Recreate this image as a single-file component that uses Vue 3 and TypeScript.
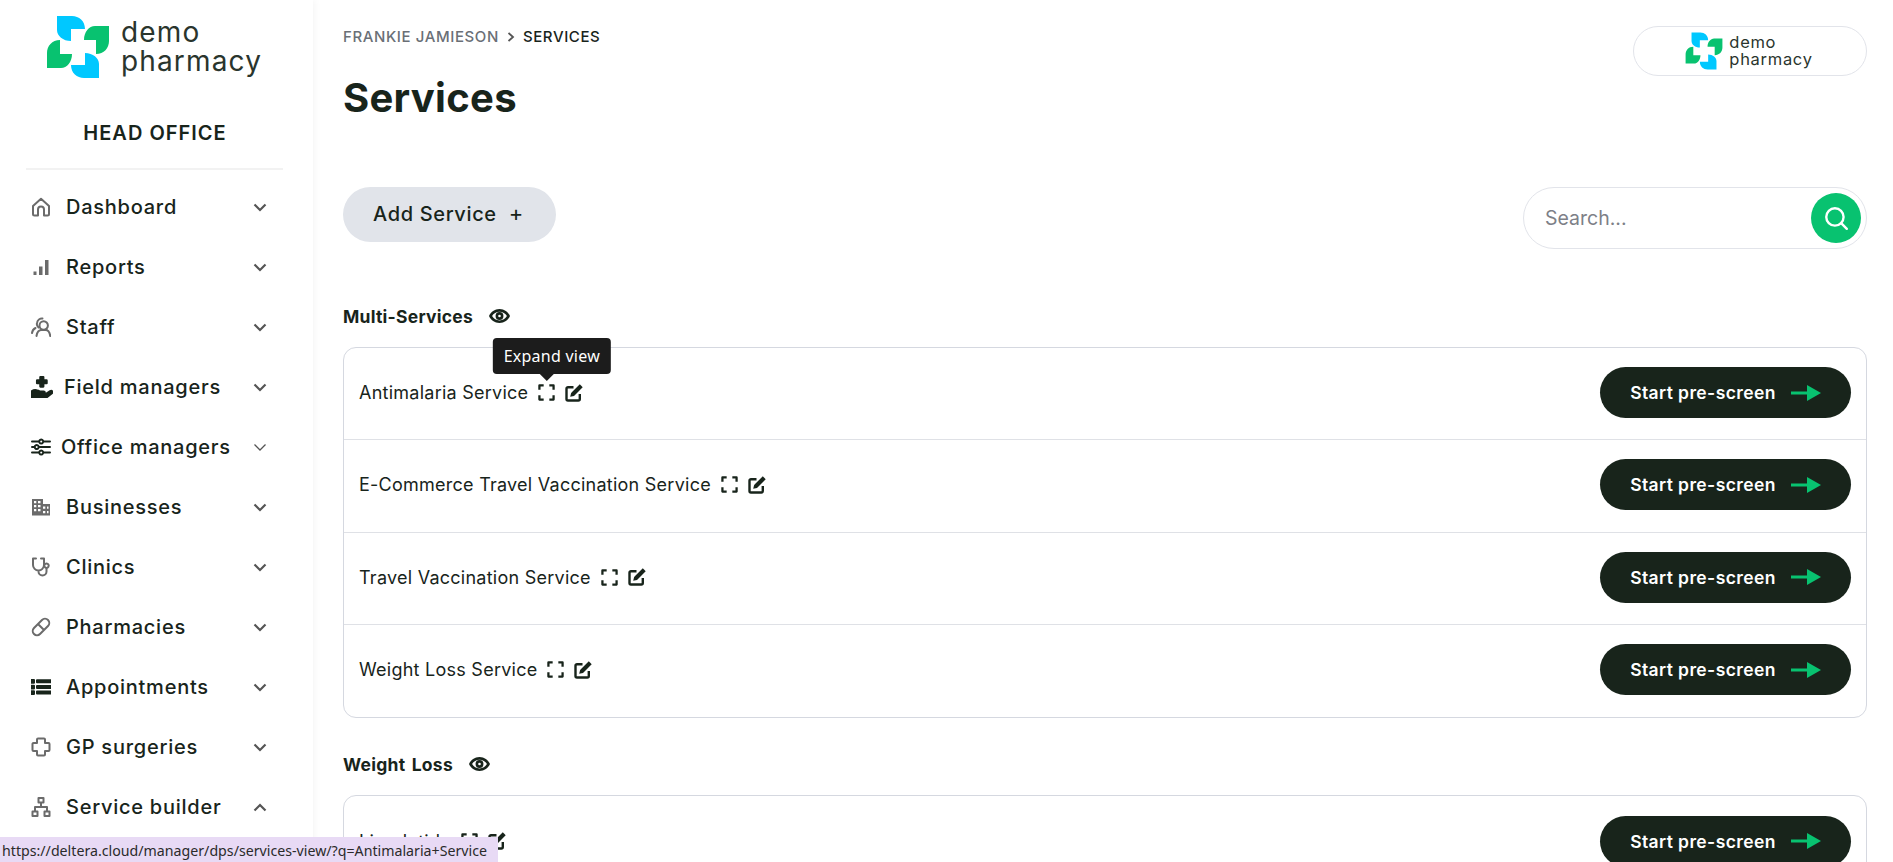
<script setup lang="ts">
interface NavItem { label: string; icon: string; filled?: boolean; cls?: string; open?: boolean }
const nav: NavItem[] = [
  { label: 'Dashboard', icon: 'M2 9 10 1.800 18 9v8a1.500 1.500 0 0 1-1.500 1.500H13V12.500a3 3 0 0 0-6 0v6H3.500A1.500 1.500 0 0 1 2 17Z' },
  { label: 'Reports', filled: true, icon: 'M2.500 14.500h3v3.500h-3ZM8 9.500h3.500V18H8ZM14 3h3.500v15H14Z' },
  { label: 'Staff', icon: 'M8.500 8.500a4.200 4.200 0 1 1 8.400 0 4.200 4.200 0 0 1-8.400 0ZM5.500 19c.5-3.500 2.500-6 5-6h4c2.500 0 4.300 2.500 4.700 6M7.500 10.500a4.500 4.500 0 0 1-1.500-4.500c.5-3 3-4.800 5.500-4.500M1 16c.3-2.300 1.500-4 3.500-5' },
  { label: 'Field managers', filled: true, cls: 'dark wide', icon: 'M8.500 1h2.700v3h3v2.600h-3v3H8.500v-3h-3V4h3ZM0 14.300c2-1.500 4-2 6-1l2 .8h3.500c1.300 0 1.300 2 0 2H9v.7h4l4.500-3c1.500-.8 2.700.7 1.500 1.800L14 19.500H0Z' },
  { label: 'Office managers', cls: 'dark slim', icon: 'M1 4.500h7m4.500 0H19M1 10h2.500m4.500 0h11M1 15.500h7m4.500 0H19M10.200 2.500a2 2 0 1 0 .01 0ZM5.700 8a2 2 0 1 0 .01 0ZM10.200 13.500a2 2 0 1 0 .01 0Z' },
  { label: 'Businesses', filled: true, icon: 'M1 2h11v5h7v11.500H1Zm2 2v2.200h2.300V4Zm4 0v2.200h2.500V4ZM3 8v2.300h2.300V8Zm4 0v2.300h2.500V8Zm5 1.500v2.300h2.300V9.500Zm4 0v2.300h1.500V9.500ZM3 12v2.300h2.300V12Zm4 0v2.300h2.500V12Zm5 2v2.300h2.300V14Zm4 0v2.300h1.500V14Z' },
  { label: 'Clinics', icon: 'M5 1.500H2v6.500a5.500 5.500 0 0 0 11 0V1.500h-3M7.500 13.500v1a4 4 0 0 0 8 0v-3M15.500 6.500a2.200 2.200 0 1 0 .01 0Z' },
  { label: 'Pharmacies', icon: 'M3 11 11 3a4.200 4.200 0 0 1 6 6l-8 8a4.200 4.200 0 0 1-6-6ZM7 7l6 6' },
  { label: 'Appointments', cls: 'dark', filled: true, icon: 'M0 3h3v2.700H0Zm6 .300h14v2H6ZM0 8.700h3v2.700H0Zm6 .300h14v2H6ZM0 14.300h3V17H0Zm6 .300h14v2H6Z' },
  { label: 'GP surgeries', icon: 'M7 1.500h6a1 1 0 0 1 1 1V6h3.500a1 1 0 0 1 1 1v6a1 1 0 0 1-1 1H14v3.500a1 1 0 0 1-1 1H7a1 1 0 0 1-1-1V14H2.500a1 1 0 0 1-1-1V7a1 1 0 0 1 1-1H6V2.500a1 1 0 0 1 1-1Z' },
  { label: 'Service builder', open: true, icon: 'M7.500 1h5v4.500h-5ZM1.500 14.500h5V19h-5ZM13.500 14.500h5V19h-5ZM10 5.500V10M4 14.500V10h12v4.500' }
]
const sections = [
  { title: 'Multi-Services', rows: ['Antimalaria Service', 'E-Commerce Travel Vaccination Service', 'Travel Vaccination Service', 'Weight Loss Service'] },
  { title: 'Weight Loss', rows: ['Liraglutide'] }
]
</script>

<template>
  <div class="page">
    <svg class="defs" width="0" height="0" aria-hidden="true">
      <defs>
        <path id="leaf" d="M11 1H26C33 1 39 6 39 14H25V26C17 26 11 21 11 15Z" />
        <symbol id="logo-mark" viewBox="0 0 64 64">
          <use href="#leaf" fill="#00c8ff" />
          <use href="#leaf" fill="#08c270" transform="rotate(90 32 32)" />
          <use href="#leaf" fill="#00c8ff" transform="rotate(180 32 32)" />
          <use href="#leaf" fill="#08c270" transform="rotate(270 32 32)" />
        </symbol>
      </defs>
    </svg>

    <aside class="side">
      <div class="brand">
        <svg class="mark"><use href="#logo-mark" /></svg>
        <div class="brand-text">demo<br />pharmacy</div>
      </div>
      <div class="office">HEAD OFFICE</div>
      <nav class="nav">
        <div v-for="n in nav" :key="n.label" class="nav-item" :class="n.cls">
          <svg class="nav-icon" viewBox="0 0 20 20" :class="{ filled: n.filled }"><path :d="n.icon" fill-rule="evenodd" /></svg>
          <span class="nav-label">{{ n.label }}</span>
          <svg class="chev" :class="{ up: n.open }" viewBox="0 0 14 9"><path d="M1.500 1.500 7 7l5.500-5.500" /></svg>
        </div>
      </nav>
    </aside>

    <main class="main">
      <header class="top">
        <div>
          <div class="crumbs">
            <span class="crumb-a">FRANKIE JAMIESON</span>
            <svg class="crumb-sep" viewBox="0 0 8 10"><path d="M1.500 1 6 5 1.500 9" /></svg>
            <span class="crumb-b">SERVICES</span>
          </div>
          <h1 class="title">Services</h1>
        </div>
        <div class="pill">
          <svg class="mark-sm"><use href="#logo-mark" /></svg>
          <div class="pill-text">demo<br />pharmacy</div>
        </div>
      </header>

      <div class="tools">
        <button class="add">Add Service <span class="plus">+</span></button>
        <div class="search">
          <span class="placeholder">Search...</span>
          <span class="go">
            <svg viewBox="0 0 24 24"><circle cx="11" cy="11" r="8" /><path d="m17 17 5 5" /></svg>
          </span>
        </div>
      </div>

      <section v-for="(s, si) in sections" :key="s.title" class="section">
        <div class="sec-head">
          <span>{{ s.title }}</span>
          <svg class="eye" viewBox="0 0 24 16"><path d="M12 0C6.500 0 2 3.300 0 8c2 4.700 6.500 8 12 8s10-3.300 12-8c-2-4.700-6.500-8-12-8Zm0 3c3.700 0 6.800 2 8.500 5-1.700 3-4.800 5-8.500 5s-6.800-2-8.500-5C5.200 5 8.300 3 12 3Zm0 .500a4.500 4.500 0 1 0 0 9 4.500 4.500 0 0 0 0-9Zm0 3a1.500 1.500 0 1 1 0 3 1.500 1.500 0 0 1 0-3Z" fill-rule="evenodd" /></svg>
        </div>
        <div class="card">
          <div v-for="(r, ri) in s.rows" :key="r" class="row">
            <div class="row-name">
              <span>{{ r }}</span>
              <span class="expand-wrap">
                <svg class="ico" viewBox="0 0 18 18"><path d="M1.500 6V1.500H6M12 1.500h4.500V6M16.500 12v4.500H12M6 16.500H1.500V12" /></svg>
                <span v-if="si === 0 && ri === 0" class="tip">Expand view</span>
              </span>
              <svg class="ico edit" viewBox="0 0 18 18"><path d="M8.500 3.200H3A1.500 1.500 0 0 0 1.500 4.700V15A1.500 1.500 0 0 0 3 16.500h10.300a1.500 1.500 0 0 0 1.500-1.500V10" /><path class="solid" d="M14.800.3 17.700 3.200 9 11.900l-3.800.9.900-3.800Z" /></svg>
            </div>
            <button class="start">Start pre-screen
              <svg class="arrow" viewBox="0 0 30 16"><path d="M0 6.500h16V0l14 8-14 8V9.500H0Z" /></svg>
            </button>
          </div>
        </div>
      </section>
    </main>

    <div class="status">https://deltera.cloud/manager/dps/services-view/?q=Antimalaria+Service</div>
  </div>
</template>

<style>
html, body { margin: 0; background: #fff; overflow: hidden; }
</style>

<style scoped>
.page { display: flex; height: 862px; overflow: hidden; font-family: Inter, "Noto Sans", sans-serif; color: #18241b; background: #fff; position: relative; }
.defs { position: absolute; }
.side { width: 313px; flex: none; box-shadow: 1px 0 8px rgba(0, 0, 0, .05); display: flex; flex-direction: column; }
.brand { display: flex; align-items: center; gap: 11px; padding: 14px 0 0 46px; height: 65px; }
.mark { width: 64px; height: 64px; flex: none; }
.brand-text { font-size: 28px; line-height: 29px; letter-spacing: 1.15px; color: #2a352d; }
.office { margin-top: 42px; text-align: center; font-size: 20px; font-weight: 600; line-height: 24px; letter-spacing: 1px; padding-right: 3px; }
.nav { margin: 23px 30px 0 26px; border-top: 2px solid #f2f2f2; padding-top: 7px; }
.nav-item { display: flex; align-items: center; height: 60px; padding: 0 16px 0 5px; font-size: 20px; font-weight: 550; letter-spacing: .75px; }
.nav-icon { width: 20px; height: 20px; flex: none; fill: none; stroke: #6b6b6b; stroke-width: 2; stroke-linecap: round; stroke-linejoin: round; margin-right: 15px; }
.nav-icon.filled { fill: #6b6b6b; stroke: none; }
.dark .nav-icon { stroke: #18241b; }
.dark .nav-icon.filled { fill: #18241b; }
.wide .nav-icon { width: 22px; height: 22px; margin-right: 11px; }
.slim .nav-icon { margin-right: 10px; }
.nav-label { flex: 1; white-space: nowrap; }
.chev { width: 14px; height: 9px; fill: none; stroke: #555; stroke-width: 2.200; flex: none; }
.slim .chev { stroke-width: 1.300; }
.chev.up { transform: rotate(180deg); }
.main { flex: 1; padding: 0 26px 0 30px; min-width: 0; }
.top { display: flex; justify-content: space-between; height: 187px; }
.crumbs { display: flex; align-items: center; gap: 8px; padding-top: 28px; font-size: 15px; font-weight: 500; line-height: 18px; letter-spacing: .6px; }
.crumb-a { color: #6a6f76; }
.crumb-sep { width: 8px; height: 10px; fill: none; stroke: #555; stroke-width: 1.800; }
.title { margin: 27px 0 0; font-size: 40px; font-weight: 700; line-height: 50px; letter-spacing: .3px; }
.pill { margin-top: 26px; width: 234px; height: 50px; border: 1px solid #e2e4ea; border-radius: 25px; display: flex; align-items: center; justify-content: center; gap: 6px; box-sizing: border-box; padding-right: 2px; }
.mark-sm { width: 38px; height: 38px; flex: none; }
.pill-text { font-size: 16.500px; line-height: 17px; letter-spacing: .7px; color: #2a352d; }
.tools { display: flex; justify-content: space-between; align-items: flex-start; }
.add { width: 213px; height: 55px; border: 0; border-radius: 28px; background: #e1e4ea; color: #18241b; font: 550 20px Inter, sans-serif; letter-spacing: .65px; padding: 0 2px 3px 0; }
.plus { margin-left: 6px; font-weight: 400; font-size: 22px; }
.search { width: 344px; height: 62px; box-sizing: border-box; border: 1px solid #e2e4ea; border-radius: 31px; display: flex; align-items: center; justify-content: space-between; padding: 0 5px 0 21px; }
.placeholder { font-size: 19.500px; color: #7d8087; }
.go { width: 50px; height: 50px; border-radius: 50%; background: #08c270; display: flex; align-items: center; justify-content: center; }
.go svg { width: 26px; height: 26px; fill: none; stroke: #fff; stroke-width: 2.200; stroke-linecap: round; }
.sec-head { display: flex; align-items: center; gap: 16px; height: 30px; margin-top: 52px; font-size: 17.500px; font-weight: 700; letter-spacing: .25px; word-spacing: 2px; }
.section + .section .sec-head { margin-top: 31px; }
.eye { width: 21px; height: 14px; fill: #18241b; }
.card { margin-top: 16px; border: 1px solid #d5d8e0; border-radius: 13px; background: #fff; }
.row { box-sizing: border-box; display: flex; align-items: center; justify-content: space-between; height: 92.250px; padding: 0 15px 2px; border-bottom: 1px solid #dfe1e6; }
.row:last-child { border-bottom: 0; }
.row-name { display: flex; align-items: center; gap: 10px; font-size: 18px; letter-spacing: .25px; }
.expand-wrap { position: relative; display: flex; }
.ico { width: 17px; height: 17px; fill: none; stroke: #18241b; stroke-width: 2.400; stroke-linejoin: round; }
.ico.edit { width: 18px; height: 18px; }
.ico .solid { fill: #18241b; stroke: none; }
.tip { position: absolute; left: calc(50% + 5px); bottom: 27px; transform: translateX(-50%); background: #1c1c1c; color: #fff; font: 16px/36px "Noto Sans", sans-serif; padding: 0 11px; border-radius: 4px; white-space: nowrap; }
.tip::after { content: ""; position: absolute; left: 50%; top: 100%; margin-left: -12px; border: 7px solid transparent; border-bottom: 0; border-top-color: #1c1c1c; }
.start { width: 251px; height: 51px; border: 0; border-radius: 26px; background: #18241b; color: #fff; font: 600 17.500px Inter, sans-serif; letter-spacing: .4px; display: flex; align-items: center; justify-content: center; gap: 15px; padding: 0; }
.arrow { width: 30px; height: 16px; fill: #08c270; }
.status { position: absolute; left: 0; bottom: 0; height: 25px; width: 498px; background: #e8daf5; color: #2b2b2b; font: 14.200px/27px "Noto Sans", sans-serif; padding-left: 2px; box-sizing: border-box; white-space: nowrap; overflow: hidden; }
</style>
